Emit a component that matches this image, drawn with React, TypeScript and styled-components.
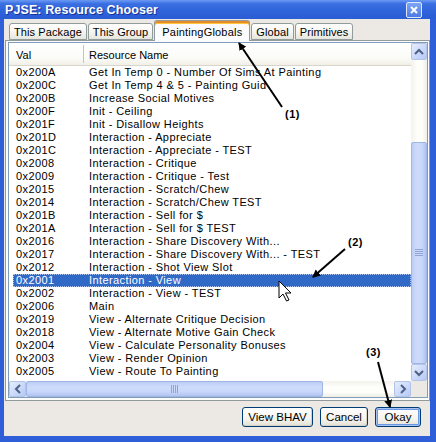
import styled, { createGlobalStyle } from 'styled-components'

const GlobalStyle = createGlobalStyle`
  html, body {
    margin: 0;
    padding: 0;
    background: #ffffff;
  }
  body {
    font-family: "Liberation Sans", Arial, sans-serif;
    font-size: 11px;
    color: #000;
  }
`

const rows: [string, string][] = [
  ['0x200A', 'Get In Temp 0 - Number Of Sims At Painting'],
  ['0x200C', 'Get In Temp 4 & 5 - Painting Guid'],
  ['0x200B', 'Increase Social Motives'],
  ['0x200F', 'Init - Ceiling'],
  ['0x201F', 'Init - Disallow Heights'],
  ['0x201D', 'Interaction - Appreciate'],
  ['0x201C', 'Interaction - Appreciate - TEST'],
  ['0x2008', 'Interaction - Critique'],
  ['0x2009', 'Interaction - Critique - Test'],
  ['0x2015', 'Interaction - Scratch/Chew'],
  ['0x2014', 'Interaction - Scratch/Chew TEST'],
  ['0x201B', 'Interaction - Sell for $'],
  ['0x201A', 'Interaction - Sell for $ TEST'],
  ['0x2016', 'Interaction - Share Discovery With...'],
  ['0x2017', 'Interaction - Share Discovery With... - TEST'],
  ['0x2012', 'Interaction - Shot View Slot'],
  ['0x2001', 'Interaction - View'],
  ['0x2002', 'Interaction - View - TEST'],
  ['0x2006', 'Main'],
  ['0x2019', 'View - Alternate Critique Decision'],
  ['0x2018', 'View - Alternate Motive Gain Check'],
  ['0x2004', 'View - Calculate Personality Bonuses'],
  ['0x2003', 'View - Render Opinion'],
  ['0x2005', 'View - Route To Painting'],
]

const tabs = ['This Package', 'This Group', 'PaintingGlobals', 'Global', 'Primitives']
const activeTab = 2
const selectedRow = 16

const Window = styled.div`
  position: relative;
  width: 436px;
  height: 442px;
  display: flex;
  flex-direction: column;
  overflow: hidden;
  background: #2b5bd6;
`

const TitleBar = styled.div`
  height: 19px;
  flex: 0 0 19px;
  display: flex;
  align-items: center;
  justify-content: space-between;
  padding: 0 14px 0 5px;
  background: linear-gradient(180deg, #6b9af2 0%, #3a6fe2 20%, #2f63da 60%, #2a5cd4 100%);
`

const Title = styled.span`
  color: #fff;
  font-weight: bold;
  font-size: 12.5px;
  letter-spacing: 0.1px;
  text-shadow: 1px 1px 0 #17309a;
`

const CloseButton = styled.div`
  width: 14px;
  height: 14px;
  border: 1px solid #dfe8fb;
  border-radius: 2px;
  background: linear-gradient(180deg, #7fa6f5, #4a7ae6);
  display: flex;
  align-items: center;
  justify-content: center;
`

const Frame = styled.div`
  flex: 1;
  display: flex;
  border-left: 4px solid #2f5fd8;
  border-right: 6px solid #2f5fd8;
  border-bottom: 6px solid #2f5fd8;
  box-shadow: inset 1px 0 0 #a8bdf0;
`

const Body = styled.div`
  flex: 1;
  display: flex;
  flex-direction: column;
  background: #ece9e4;
  padding: 0 0 0 1px;
`

const TabStrip = styled.div`
  position: relative;
  z-index: 1;
  height: 22px;
  margin-bottom: -1px;
  display: flex;
  align-items: flex-end;
  padding-left: 4px;
  gap: 1px;
`

const Tab = styled.div<{ $active?: boolean }>`
  box-sizing: border-box;
  height: ${(p) => (p.$active ? 21 : 17)}px;
  margin-bottom: ${(p) => (p.$active ? 0 : 1)}px;
  padding: 0 ${(p) => (p.$active ? 7 : 4)}px;
  display: flex;
  align-items: center;
  border: 1px solid #919b9c;
  border-bottom: ${(p) => (p.$active ? 'none' : '1px solid #919b9c')};
  border-radius: 3px 3px 0 0;
  background: ${(p) =>
    p.$active ? '#fcfcfe' : 'linear-gradient(180deg, #ffffff 0%, #f6f5f1 50%, #e6e5dd 100%)'};
  box-shadow: ${(p) => (p.$active ? 'inset 0 2px 0 #e68b2c, inset 0 3px 0 #ffc73c' : 'none')};
  white-space: nowrap;
  font-size: 11px;
  letter-spacing: ${(p) => (p.$active ? 0.2 : 0.1)}px;
  padding-top: ${(p) => (p.$active ? 1 : 0)}px;
`

const Panel = styled.div`
  height: 361px;
  box-sizing: border-box;
  border: 1px solid #919b9c;
  background: #fcfcfe;
  padding: 1px 1px 2px 2px;
  display: flex;
`

const ListBox = styled.div`
  flex: 1;
  border: 1px solid #7f9db9;
  background: #fff;
  display: grid;
  grid-template-columns: 1fr 16px;
  grid-template-rows: 1fr 16px;
  overflow: hidden;
`

const ListContent = styled.div`
  display: flex;
  flex-direction: column;
  overflow: hidden;
`

const Header = styled.div`
  height: 22px;
  flex: 0 0 22px;
  display: grid;
  grid-template-columns: 75px 1fr;
  border-bottom: 1px solid #d8d5ca;
  background: linear-gradient(180deg, #ffffff 0%, #fbfbf8 70%, #f1efe6 100%);
`

const HeaderCell = styled.div<{ $pad: number; $sep?: boolean }>`
  display: flex;
  align-items: center;
  padding-left: ${(p) => p.$pad}px;
  padding-top: 1px;
  border-right: ${(p) => (p.$sep ? '1px solid #c7c5b8' : 'none')};
  margin: ${(p) => (p.$sep ? '2px 0' : '0')};
  white-space: nowrap;
`

const Row = styled.div<{ $selected?: boolean }>`
  height: 13px;
  flex: 0 0 13px;
  margin-left: 4px;
  display: grid;
  grid-template-columns: 70px 1fr;
  align-items: center;
  line-height: 13px;
  white-space: nowrap;
  letter-spacing: 0.4px;
  box-sizing: border-box;
  background: ${(p) => (p.$selected ? '#3169c6' : 'transparent')};
  color: ${(p) => (p.$selected ? '#fff' : '#000')};
  outline: ${(p) => (p.$selected ? '1px dotted #a9c2ec' : 'none')};
  outline-offset: -1px;
`

const Cell = styled.span<{ $pad: number }>`
  padding-left: ${(p) => p.$pad}px;
  overflow: hidden;
`

const VScroll = styled.div`
  display: flex;
  flex-direction: column;
  background: linear-gradient(90deg, #f3f2ec, #fefefb 40%, #fdfdfa 70%, #eeede5);
`

const HScroll = styled.div`
  display: flex;
  background: linear-gradient(180deg, #f3f2ec, #fefefb 40%, #fdfdfa 70%, #eeede5);
`

const Corner = styled.div`
  background: #ece9e4;
`

const ScrollButton = styled.div`
  flex: 0 0 17px;
  box-sizing: border-box;
  border: 1px solid #b4c4e8;
  border-radius: 2px;
  background: linear-gradient(135deg, #e6eefc 0%, #c8d7fa 60%, #b7c9f3 100%);
  display: flex;
  align-items: center;
  justify-content: center;
`

const Thumb = styled.div<{ $vertical?: boolean }>`
  box-sizing: border-box;
  border: 1px solid #9fb5e2;
  border-radius: 2px;
  background: ${(p) =>
    p.$vertical
      ? 'linear-gradient(90deg, #bccdf5, #cedbfb 35%, #c8d7fb 70%, #b0c4f0)'
      : 'linear-gradient(180deg, #bccdf5, #cedbfb 35%, #c8d7fb 70%, #b0c4f0)'};
  display: flex;
  align-items: center;
  justify-content: center;
`

const Track = styled.div<{ $size?: number }>`
  flex: ${(p) => (p.$size ? `0 0 ${p.$size}px` : '1')};
`

const ButtonRow = styled.div`
  display: flex;
  justify-content: flex-end;
  gap: 7px;
  padding: 6px 9px 0 0;
`

const Button = styled.button<{ $width: number; $default?: boolean }>`
  width: ${(p) => p.$width}px;
  height: 20px;
  padding: 0;
  font-family: "Liberation Sans", Arial, sans-serif;
  font-size: 11.5px;
  color: #000;
  border: 1px solid #003c74;
  border-radius: 3px;
  background: linear-gradient(180deg, #ffffff 0%, #f5f4ef 60%, #e3e0d4 100%);
  box-shadow: ${(p) =>
    p.$default
      ? 'inset 0 0 0 1px #a7c2f1, inset 0 0 0 2px #6b97e6'
      : 'inset -1px -1px 0 #d6d0c5'};
`

const Note = styled.span<{ $x: number; $y: number }>`
  position: absolute;
  left: ${(p) => p.$x}px;
  top: ${(p) => p.$y}px;
  font-weight: bold;
  font-size: 11px;
  letter-spacing: 0.5px;
  color: #000;
`

const Overlay = styled.svg`
  position: absolute;
  left: 0;
  top: 0;
  pointer-events: none;
`

const Arrow = ({ dir }: { dir: 'up' | 'down' | 'left' | 'right' }) => {
  const d = {
    up: 'M1 6 L5 2 L9 6',
    down: 'M1 2 L5 6 L9 2',
    left: 'M6 1 L2 5 L6 9',
    right: 'M2 1 L6 5 L2 9',
  }[dir]
  const w = dir === 'up' || dir === 'down' ? 10 : 8
  const h = dir === 'up' || dir === 'down' ? 8 : 10
  return (
    <svg width={w} height={h} viewBox={`0 0 ${w} ${h}`}>
      <path d={d} fill="none" stroke="#4d6185" strokeWidth="2" />
    </svg>
  )
}

const Grip = ({ vertical }: { vertical?: boolean }) => (
  <svg width={8} height={8} viewBox="0 0 8 8">
    {[0, 2, 4, 6].map((o) =>
      vertical ? (
        <line key={o} x1="0" x2="8" y1={o + 0.5} y2={o + 0.5} stroke="#8ea4d6" />
      ) : (
        <line key={o} y1="0" y2="8" x1={o + 0.5} x2={o + 0.5} stroke="#8ea4d6" />
      ),
    )}
  </svg>
)

export default function App() {
  return (
    <>
      <GlobalStyle />
      <Window>
        <TitleBar>
          <Title>PJSE: Resource Chooser</Title>
          <CloseButton>
            <svg width="10" height="10" viewBox="0 0 10 10">
              <path d="M2 2 L8 8 M8 2 L2 8" stroke="#fff" strokeWidth="2" />
            </svg>
          </CloseButton>
        </TitleBar>
        <Frame>
          <Body>
            <TabStrip>
              {tabs.map((t, i) => (
                <Tab key={t} $active={i === activeTab}>
                  {t}
                </Tab>
              ))}
            </TabStrip>
            <Panel>
              <ListBox>
                <ListContent>
                  <Header>
                    <HeaderCell $pad={7} $sep>
                      Val
                    </HeaderCell>
                    <HeaderCell $pad={5}>Resource Name</HeaderCell>
                  </Header>
                  {rows.map(([val, name], i) => (
                    <Row key={val} $selected={i === selectedRow}>
                      <Cell $pad={3}>{val}</Cell>
                      <Cell $pad={6}>{name}</Cell>
                    </Row>
                  ))}
                </ListContent>
                <VScroll>
                  <ScrollButton>
                    <Arrow dir="up" />
                  </ScrollButton>
                  <Track $size={82} />
                  <Thumb $vertical style={{ flex: 1 }}>
                    <Grip vertical />
                  </Thumb>
                  <ScrollButton>
                    <Arrow dir="down" />
                  </ScrollButton>
                </VScroll>
                <HScroll>
                  <ScrollButton>
                    <Arrow dir="left" />
                  </ScrollButton>
                  <Thumb style={{ flex: '0 0 297px' }}>
                    <Grip />
                  </Thumb>
                  <Track />
                  <ScrollButton>
                    <Arrow dir="right" />
                  </ScrollButton>
                </HScroll>
                <Corner />
              </ListBox>
            </Panel>
            <ButtonRow>
              <Button $width={71}>View BHAV</Button>
              <Button $width={48}>Cancel</Button>
              <Button $width={46} $default>
                Okay
              </Button>
            </ButtonRow>
          </Body>
        </Frame>

        <Overlay width={436} height={442} viewBox="0 0 436 442">
          <defs>
            <marker id="head" markerWidth="8" markerHeight="8" refX="7" refY="4" orient="auto" markerUnits="userSpaceOnUse">
              <path d="M0 0 L8 4 L0 8 Z" fill="#000" />
            </marker>
          </defs>
          <line x1="282" y1="107" x2="239" y2="43" stroke="#000" strokeWidth="2" markerEnd="url(#head)" />
          <line x1="345" y1="249" x2="313" y2="277" stroke="#000" strokeWidth="2" markerEnd="url(#head)" />
          <line x1="378" y1="362" x2="390" y2="407" stroke="#000" strokeWidth="2" markerEnd="url(#head)" />
          <path
            d="M279 281 L279 298 L283 294 L286.5 301 L289 300 L285.5 293 L291 293 Z"
            fill="#fff"
            stroke="#000"
            strokeWidth="1"
            strokeLinejoin="miter"
          />
        </Overlay>
        <Note $x={285} $y={108}>(1)</Note>
        <Note $x={348} $y={236}>(2)</Note>
        <Note $x={366} $y={346}>(3)</Note>
      </Window>
    </>
  )
}
